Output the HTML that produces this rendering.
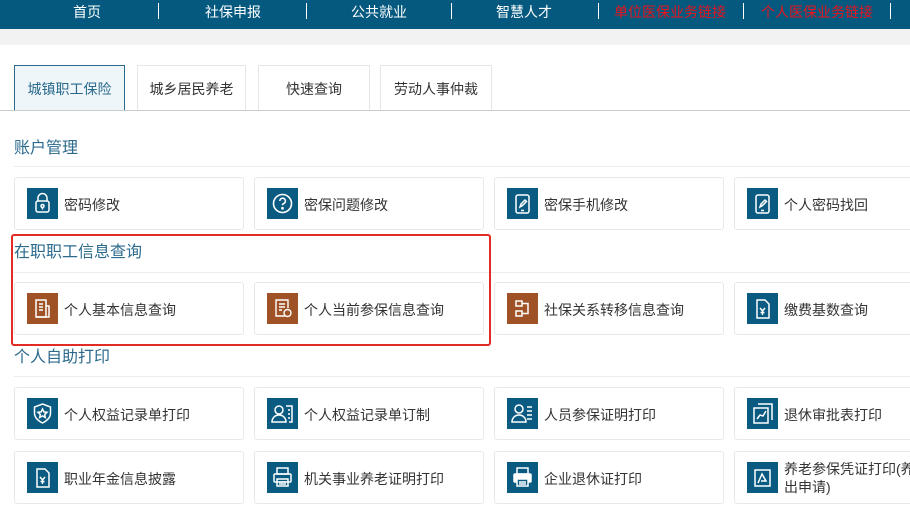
<!DOCTYPE html>
<html><head><meta charset="utf-8"><style>
*{margin:0;padding:0;box-sizing:border-box}
body{width:910px;height:514px;overflow:hidden;background:#fff;font-family:"Liberation Sans","Noto Sans CJK SC",sans-serif;position:relative;color:#333}
.nav{position:absolute;left:0;top:0;width:910px;height:29px;background:#05597f}
.nav span{position:absolute;top:2px;font-size:14px;color:#fff;transform:translateX(-50%);white-space:nowrap}
.nav .r{color:#e8141e}
.nav i{position:absolute;top:3px;width:1px;height:16px;background:#fff}
.gray{position:absolute;left:0;top:29px;width:910px;height:16px;background:#f2f2f2}
.tab{position:absolute;top:65px;height:46px;border:1px solid #e6e6e6;border-bottom:none;font-size:14px;line-height:46px;text-align:center;color:#333;background:#fff}
.tab.a{border:1px solid #2b6a8c;border-bottom:none;background:#eef6fa;color:#2b6a8c}
.tline{position:absolute;left:0;top:110px;width:910px;height:1px;background:#c8cdd0}
.h{position:absolute;left:14px;font-size:16px;color:#2b6a8c}
.hl{position:absolute;left:14px;width:896px;height:1px;background:#ececec}
.c{position:absolute;width:230px;height:53px;border:1px solid #e8e8e8;border-radius:3px;background:#fff}
.c .ic{position:absolute;left:12px;top:10px;width:31px;height:31px;background:#0b5a82}
.c .ic.b{background:#9e5225}
.c .ic svg{position:absolute;left:0;top:0}
.c .t{position:absolute;left:49px;top:18px;font-size:14px;color:#333;white-space:nowrap;line-height:18px}
.red{position:absolute;left:11px;top:234px;width:480px;height:112px;border:2px solid #e32b25;border-radius:3px}
</style></head><body>
<div class="nav">
<span style="left:87px">首页</span><i style="left:158px"></i>
<span style="left:233px">社保申报</span><i style="left:306px"></i>
<span style="left:379px">公共就业</span><i style="left:451px"></i>
<span style="left:524px">智慧人才</span><i style="left:598px"></i>
<span class="r" style="left:670px">单位医保业务链接</span><i style="left:743px"></i>
<span class="r" style="left:817px">个人医保业务链接</span><i style="left:890px"></i>
</div>
<div class="gray"></div>
<div class="tab a" style="left:14px;width:111px">城镇职工保险</div>
<div class="tab" style="left:137px;width:109px">城乡居民养老</div>
<div class="tab" style="left:258px;width:112px">快速查询</div>
<div class="tab" style="left:380px;width:112px">劳动人事仲裁</div>
<div class="tline"></div>

<div class="h" style="top:134px">账户管理</div><div class="hl" style="top:166px"></div>
<div class="h" style="top:238px">在职职工信息查询</div><div class="hl" style="top:272px"></div>
<div class="h" style="top:343px">个人自助打印</div><div class="hl" style="top:376px"></div>

<!-- row1 -->
<div class="c" style="left:14px;top:177px"><div class="ic"><svg width="31" height="31" fill="none" stroke="#fff" stroke-width="1.5"><rect x="9" y="13" width="13" height="11" rx="2"/><path d="M11 13v-3a4.5 4.5 0 0 1 9 0v3"/><circle cx="15.5" cy="18" r="1.5"/><path d="M15.5 19.5v2"/></svg></div><div class="t">密码修改</div></div>
<div class="c" style="left:254px;top:177px"><div class="ic"><svg width="31" height="31" fill="none" stroke="#fff" stroke-width="1.6"><circle cx="15.5" cy="15.5" r="9"/><path d="M12.8 13a2.8 2.8 0 1 1 3.6 2.7c-.7.3-.9.8-.9 1.6"/><circle cx="15.5" cy="20.3" r=".6" fill="#fff"/></svg></div><div class="t">密保问题修改</div></div>
<div class="c" style="left:494px;top:177px"><div class="ic"><svg width="31" height="31" fill="none" stroke="#fff" stroke-width="1.5"><rect x="9" y="7" width="13" height="18" rx="2"/><path d="M13 19l1-3 4-4 1.5 1.5-4 4z"/><path d="M14 22.5h3"/></svg></div><div class="t">密保手机修改</div></div>
<div class="c" style="left:734px;top:177px;width:190px"><div class="ic"><svg width="31" height="31" fill="none" stroke="#fff" stroke-width="1.5"><rect x="9" y="7" width="13" height="18" rx="2"/><path d="M13 19l1-3 4-4 1.5 1.5-4 4z"/><path d="M14 22.5h3"/></svg></div><div class="t">个人密码找回</div></div>
<!-- row2 -->
<div class="c" style="left:14px;top:282px"><div class="ic b"><svg width="31" height="31" fill="none" stroke="#fff" stroke-width="1.5"><path d="M9 7h10v17H9z"/><path d="M19 13h3v11H9"/><path d="M12 11h4M12 14h4M12 17h4"/></svg></div><div class="t">个人基本信息查询</div></div>
<div class="c" style="left:254px;top:282px"><div class="ic b"><svg width="31" height="31" fill="none" stroke="#fff" stroke-width="1.4"><path d="M18 23H9V7h12v8"/><path d="M12 11h6M12 14h6M12 17h3"/><circle cx="20.5" cy="20" r="3.5"/></svg></div><div class="t">个人当前参保信息查询</div></div>
<div class="c" style="left:494px;top:282px"><div class="ic b"><svg width="31" height="31" fill="none" stroke="#fff" stroke-width="1.5"><rect x="9" y="8" width="6" height="5"/><rect x="9" y="18" width="6" height="5"/><path d="M15 10.5h6v10h-6"/></svg></div><div class="t">社保关系转移信息查询</div></div>
<div class="c" style="left:734px;top:282px;width:190px"><div class="ic"><svg width="31" height="31" fill="none" stroke="#fff" stroke-width="1.5"><path d="M10 7h8l4 4v14H10z"/><path d="M13 15l2.5 3 2.5-3M15.5 18v4M13.5 19.5h4"/></svg></div><div class="t">缴费基数查询</div></div>
<!-- row3 -->
<div class="c" style="left:14px;top:387px"><div class="ic"><svg width="31" height="31" fill="none" stroke="#fff" stroke-width="1.5"><path d="M15.5 6l8 3v6c0 5-4 8-8 10-4-2-8-5-8-10V9z"/><path d="M15.5 11l1.4 2.9 3.1.4-2.3 2.1.6 3.1-2.8-1.6-2.8 1.6.6-3.1-2.3-2.1 3.1-.4z"/></svg></div><div class="t">个人权益记录单打印</div></div>
<div class="c" style="left:254px;top:387px"><div class="ic"><svg width="31" height="31" fill="none" stroke="#fff" stroke-width="1.5"><circle cx="12" cy="12" r="4"/><path d="M5 24c0-4 3-7 7-7s7 3 7 7z"/><path d="M19 8h6v16h-3M21 12h2M21 16h2M21 20h2"/></svg></div><div class="t">个人权益记录单订制</div></div>
<div class="c" style="left:494px;top:387px"><div class="ic"><svg width="31" height="31" fill="none" stroke="#fff" stroke-width="1.5"><circle cx="12" cy="11" r="4"/><path d="M5 24c0-4 3-7 7-7s7 3 7 7z"/><path d="M20 9h5M20 13h5M20 17h5M20 21h5"/></svg></div><div class="t">人员参保证明打印</div></div>
<div class="c" style="left:734px;top:387px;width:190px"><div class="ic"><svg width="31" height="31" fill="none" stroke="#fff" stroke-width="1.5"><path d="M11 6h14v16"/><path d="M7 10h14v15H7z"/><path d="M10 21l3-4 3 1 3-5"/></svg></div><div class="t">退休审批表打印</div></div>
<!-- row4 -->
<div class="c" style="left:14px;top:451px"><div class="ic"><svg width="31" height="31" fill="none" stroke="#fff" stroke-width="1.5"><path d="M10 7h8l4 4v14H10z"/><path d="M13 15l2.5 3 2.5-3M15.5 18v4M13.5 19.5h4"/></svg></div><div class="t">职业年金信息披露</div></div>
<div class="c" style="left:254px;top:451px"><div class="ic"><svg width="31" height="31" fill="none" stroke="#fff" stroke-width="1.5"><rect x="10" y="6" width="11" height="6"/><rect x="7" y="12" width="17" height="8" rx="1"/><rect x="10" y="17" width="11" height="7"/><path d="M12 20h7M12 22h7"/></svg></div><div class="t">机关事业养老证明打印</div></div>
<div class="c" style="left:494px;top:451px"><div class="ic"><svg width="31" height="31" fill="none" stroke="#fff" stroke-width="1.5"><rect x="10" y="6" width="11" height="6"/><rect x="7" y="12" width="17" height="8" rx="1" fill="#fff"/><rect x="10" y="17" width="11" height="7" fill="#0b5a82"/><path d="M12 20h7M12 22h7"/></svg></div><div class="t">企业退休证打印</div></div>
<div class="c" style="left:734px;top:451px;width:190px"><div class="ic"><svg width="31" height="31" fill="none" stroke="#fff" stroke-width="1.5"><rect x="8" y="8" width="15" height="16"/><path d="M11 21l4-9 4 7h-5"/></svg></div><div class="t" style="top:8px">养老参保凭证打印(养<br>出申请)</div></div>

<div class="red"></div>
</body></html>
